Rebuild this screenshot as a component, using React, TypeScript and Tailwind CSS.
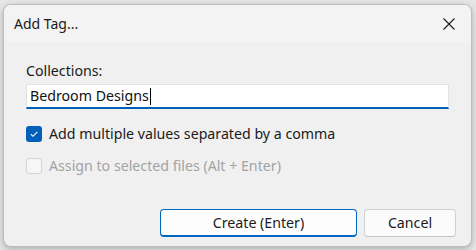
import React from "react";

export default function App() {
  return (
    <div className="w-[476px] h-[250px] bg-[#e6e6e6] pt-[4px] pl-[3px]" style={{ fontFamily: '"Noto Sans", "Open Sans", sans-serif' }}>
      <div className="w-[469px] h-[243px] rounded-[8px] border border-[#bdbdbd] bg-[#f0f0f0] shadow-[0_2px_6px_rgba(0,0,0,0.25)] flex flex-col overflow-hidden">
        <div className="h-[37px] bg-[#f3f3f3] flex items-center justify-between pl-[10px] pr-[14px]">
          <span className="text-[14px] text-[#1b1b1b] leading-none mt-[1px]">Add Tag...</span>
          <svg width="14" height="14" viewBox="0 0 14 14" className="mr-[1px] mt-[1px]">
            <path d="M1.5 1.5 L12.5 12.5 M12.5 1.5 L1.5 12.5" stroke="#1b1b1b" strokeWidth="1.1" />
          </svg>
        </div>
        <div className="flex-1 flex flex-col pl-[22px] pr-[22px] text-[14.2px]">
          <div className="mt-[20px] leading-[18px] text-[#1b1b1b]">Collections:</div>
          <div className="mt-[4px] h-[25px] w-[423px] bg-white border border-[#e2e2e2] border-b-[2px] border-b-[#005fb8] flex items-center pl-[3px] text-[#111]">
            <span>Bedroom Designs</span>
            <span className="inline-block w-[1px] h-[17px] bg-black ml-[1px]"></span>
          </div>
          <div className="mt-[14px] flex items-center">
            <div className="w-[16px] h-[16px] rounded-[3px] bg-[#005fb8] flex items-center justify-center">
              <svg width="10" height="10" viewBox="0 0 10 10">
                <path d="M1.8 5.2 L4 7.3 L8.3 2.8" stroke="white" strokeWidth="1.1" fill="none" />
              </svg>
            </div>
            <span className="ml-[7px] text-[#1b1b1b]">Add multiple values separated by a comma</span>
          </div>
          <div className="mt-[11px] flex items-center">
            <div className="w-[16px] h-[16px] rounded-[3px] border border-[#d4d4d4] bg-[#f6f6f6]"></div>
            <span className="ml-[7px] text-[#a3a3a3]">Assign to selected files (Alt + Enter)</span>
          </div>
          <div className="mt-auto mb-[9px] flex justify-end gap-[7px] mr-[-7px]">
            <div className="w-[197px] h-[28px] rounded-[4px] border border-[#0067c0] border-b-[2px] bg-[#fdfdfd] flex items-center justify-center text-[#1b1b1b]">
              Create (Enter)
            </div>
            <div className="w-[92px] h-[28px] rounded-[4px] border border-[#d0d0d0] border-b-[#c4c4c4] bg-[#fbfbfb] flex items-center justify-center text-[#1b1b1b]">
              Cancel
            </div>
          </div>
        </div>
      </div>
    </div>
  );
}
